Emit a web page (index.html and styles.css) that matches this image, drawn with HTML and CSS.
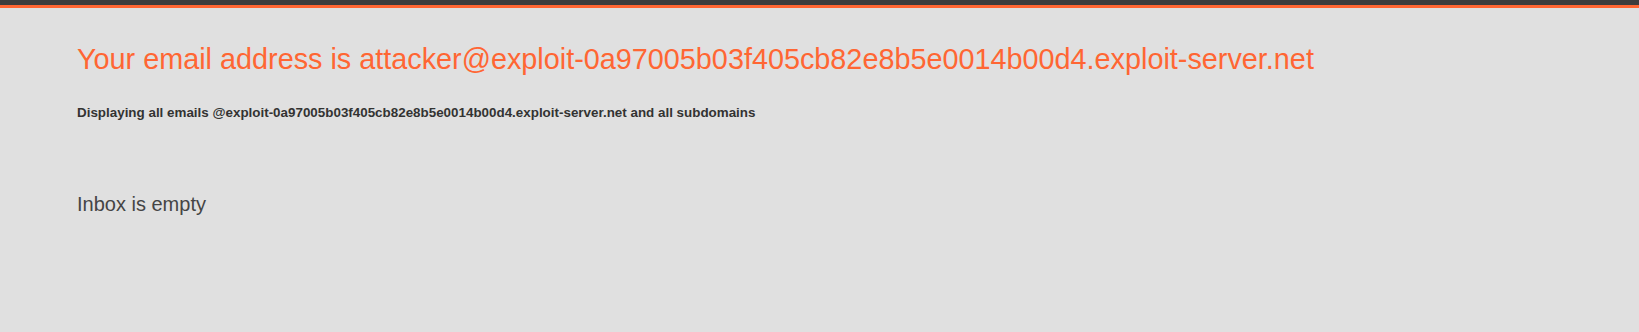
FILE: index.html
```html
<!DOCTYPE html>
<html>
<head>
<meta charset="utf-8">
<link rel="stylesheet" href="styles.css">
</head>
<body>
<div class="topbar"></div>
<div class="accent"></div>
<main class="content">
  <h1 class="address">Your email address is attacker@exploit-0a97005b03f405cb82e8b5e0014b00d4.exploit-server.net</h1>
  <p class="info">Displaying all emails @exploit-0a97005b03f405cb82e8b5e0014b00d4.exploit-server.net and all subdomains</p>
  <p class="empty">Inbox is empty</p>
</main>
</body>
</html>
```
FILE: styles.css
```css
html, body {
  margin: 0;
  padding: 0;
  background: #e0e0e0;
  font-family: "Liberation Sans", Arial, sans-serif;
}
.topbar {
  height: 5px;
  background: #3d3d3d;
}
.accent {
  height: 3px;
  background: #ff6633;
}
.content {
  padding: 0 0 0 77px;
}
.address {
  margin: 0;
  padding-top: 34px;
  font-size: 28.8px;
  font-weight: normal;
  line-height: 34px;
  color: #ff6633;
}
.info {
  margin: 29px 0 0;
  font-size: 13.4px;
  font-weight: bold;
  line-height: 16px;
  color: #333332;
}
.empty {
  margin: 71px 0 0;
  font-size: 20px;
  line-height: 24px;
  color: #454545;
}
```
